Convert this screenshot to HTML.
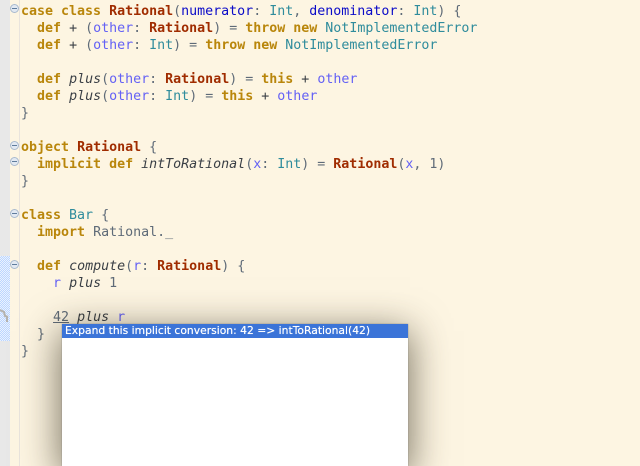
<!DOCTYPE html>
<html style="width:640px;height:466px;overflow:hidden"><head><meta charset="utf-8"><style>
html,body{margin:0;padding:0}
body{width:640px;height:466px;overflow:hidden;position:relative;background:#fdf5e2;font-family:"DejaVu Sans Mono","Liberation Mono",monospace;font-size:13.3px;color:#5f6b78}
.l{position:absolute;left:21px;height:17px;line-height:17px;white-space:pre}
.k{color:#b9860b;font-weight:bold}
.t{color:#a02c00;font-weight:bold}
.i{color:#2f8c9c}
.o{color:#6461f5}
.n{color:#0b0bc8}
.m{color:#3a3f45;font-style:italic}
.g{position:absolute;left:0;top:0;width:10px;height:466px;background:#e8e8e8}
.h{position:absolute;left:0;top:256px;width:10px;height:85px;background-color:#d6e6ff;background-image:repeating-conic-gradient(#bcd6ff 0 25%,#eaf2ff 0 50%);background-size:2px 2px}
.v{position:absolute;left:19px;top:0;width:1px;height:466px;background:#e9e4dd}
.f{position:absolute;left:10px;width:7px;height:7px;border-radius:50%;background:#e2e9f2;border:1px solid #a9bace}
.f:after{content:"";position:absolute;left:1px;top:3px;width:5px;height:1px;background:#5f7c9c}
.p{position:absolute;left:62px;top:324px;width:346px;height:142px;background:#fff;box-shadow:0 0 1px #777,0 9px 36px 2px rgba(40,32,15,.62)}
.b{position:absolute;left:0;top:0;width:346px;height:14px;background:#3b74d8;color:#fff;font:10.75px/14px "DejaVu Sans","Liberation Sans",sans-serif;padding-left:3px;box-sizing:border-box;white-space:pre;text-shadow:0 0 .5px #fff}
</style></head><body>
<div class="g"></div><div class="h"></div><div class="v"></div>
<svg style="position:absolute;left:0;top:308px" width="12" height="16" viewBox="0 0 12 16"><path d="M0 2 L4 4 L5 8 L8 9 M7 9 L7 14" fill="none" stroke="#b5b2ac" stroke-width="2"/></svg>
<div class="f" style="top:4px"></div>
<div class="f" style="top:141px"></div>
<div class="f" style="top:157px"></div>
<div class="f" style="top:209px"></div>
<div class="f" style="top:260px"></div>
<div class="l" style="top:3px"><span class="k">case class</span> <span class="t">Rational</span>(<span class="n">numerator</span>: <span class="i">Int</span>, <span class="n">denominator</span>: <span class="i">Int</span>) {</div>
<div class="l" style="top:20px">  <span class="k">def</span> <span class="m">+</span> (<span class="o">other</span>: <span class="t">Rational</span>) = <span class="k">throw new</span> <span class="i">NotImplementedError</span></div>
<div class="l" style="top:37px">  <span class="k">def</span> <span class="m">+</span> (<span class="o">other</span>: <span class="i">Int</span>) = <span class="k">throw new</span> <span class="i">NotImplementedError</span></div>
<div class="l" style="top:71px">  <span class="k">def</span> <span class="m">plus</span>(<span class="o">other</span>: <span class="t">Rational</span>) = <span class="k">this</span> <span style="color:#3a3f45">+</span> <span class="o">other</span></div>
<div class="l" style="top:88px">  <span class="k">def</span> <span class="m">plus</span>(<span class="o">other</span>: <span class="i">Int</span>) = <span class="k">this</span> <span style="color:#3a3f45">+</span> <span class="o">other</span></div>
<div class="l" style="top:105px">}</div>
<div class="l" style="top:139px"><span class="k">object</span> <span class="t">Rational</span> {</div>
<div class="l" style="top:156px">  <span class="k">implicit def</span> <span class="m">intToRational</span>(<span class="o">x</span>: <span class="i">Int</span>) = <span class="t">Rational</span>(<span class="o">x</span>, 1)</div>
<div class="l" style="top:173px">}</div>
<div class="l" style="top:207px"><span class="k">class</span> <span class="i">Bar</span> {</div>
<div class="l" style="top:224px">  <span class="k">import</span> Rational._</div>
<div class="l" style="top:258px">  <span class="k">def</span> <span class="m">compute</span>(<span class="o">r</span>: <span class="t">Rational</span>) {</div>
<div class="l" style="top:275px">    <span class="o">r</span> <span class="m">plus</span> 1</div>
<div class="l" style="top:309px">    <span style="text-decoration:underline">42</span> <span class="m">plus</span> <span class="o">r</span></div>
<div class="l" style="top:326px">  }</div>
<div class="l" style="top:343px">}</div>
<div class="p"><div class="b">Expand this implicit conversion: 42 =&gt; intToRational(42)</div></div>
</body></html>
